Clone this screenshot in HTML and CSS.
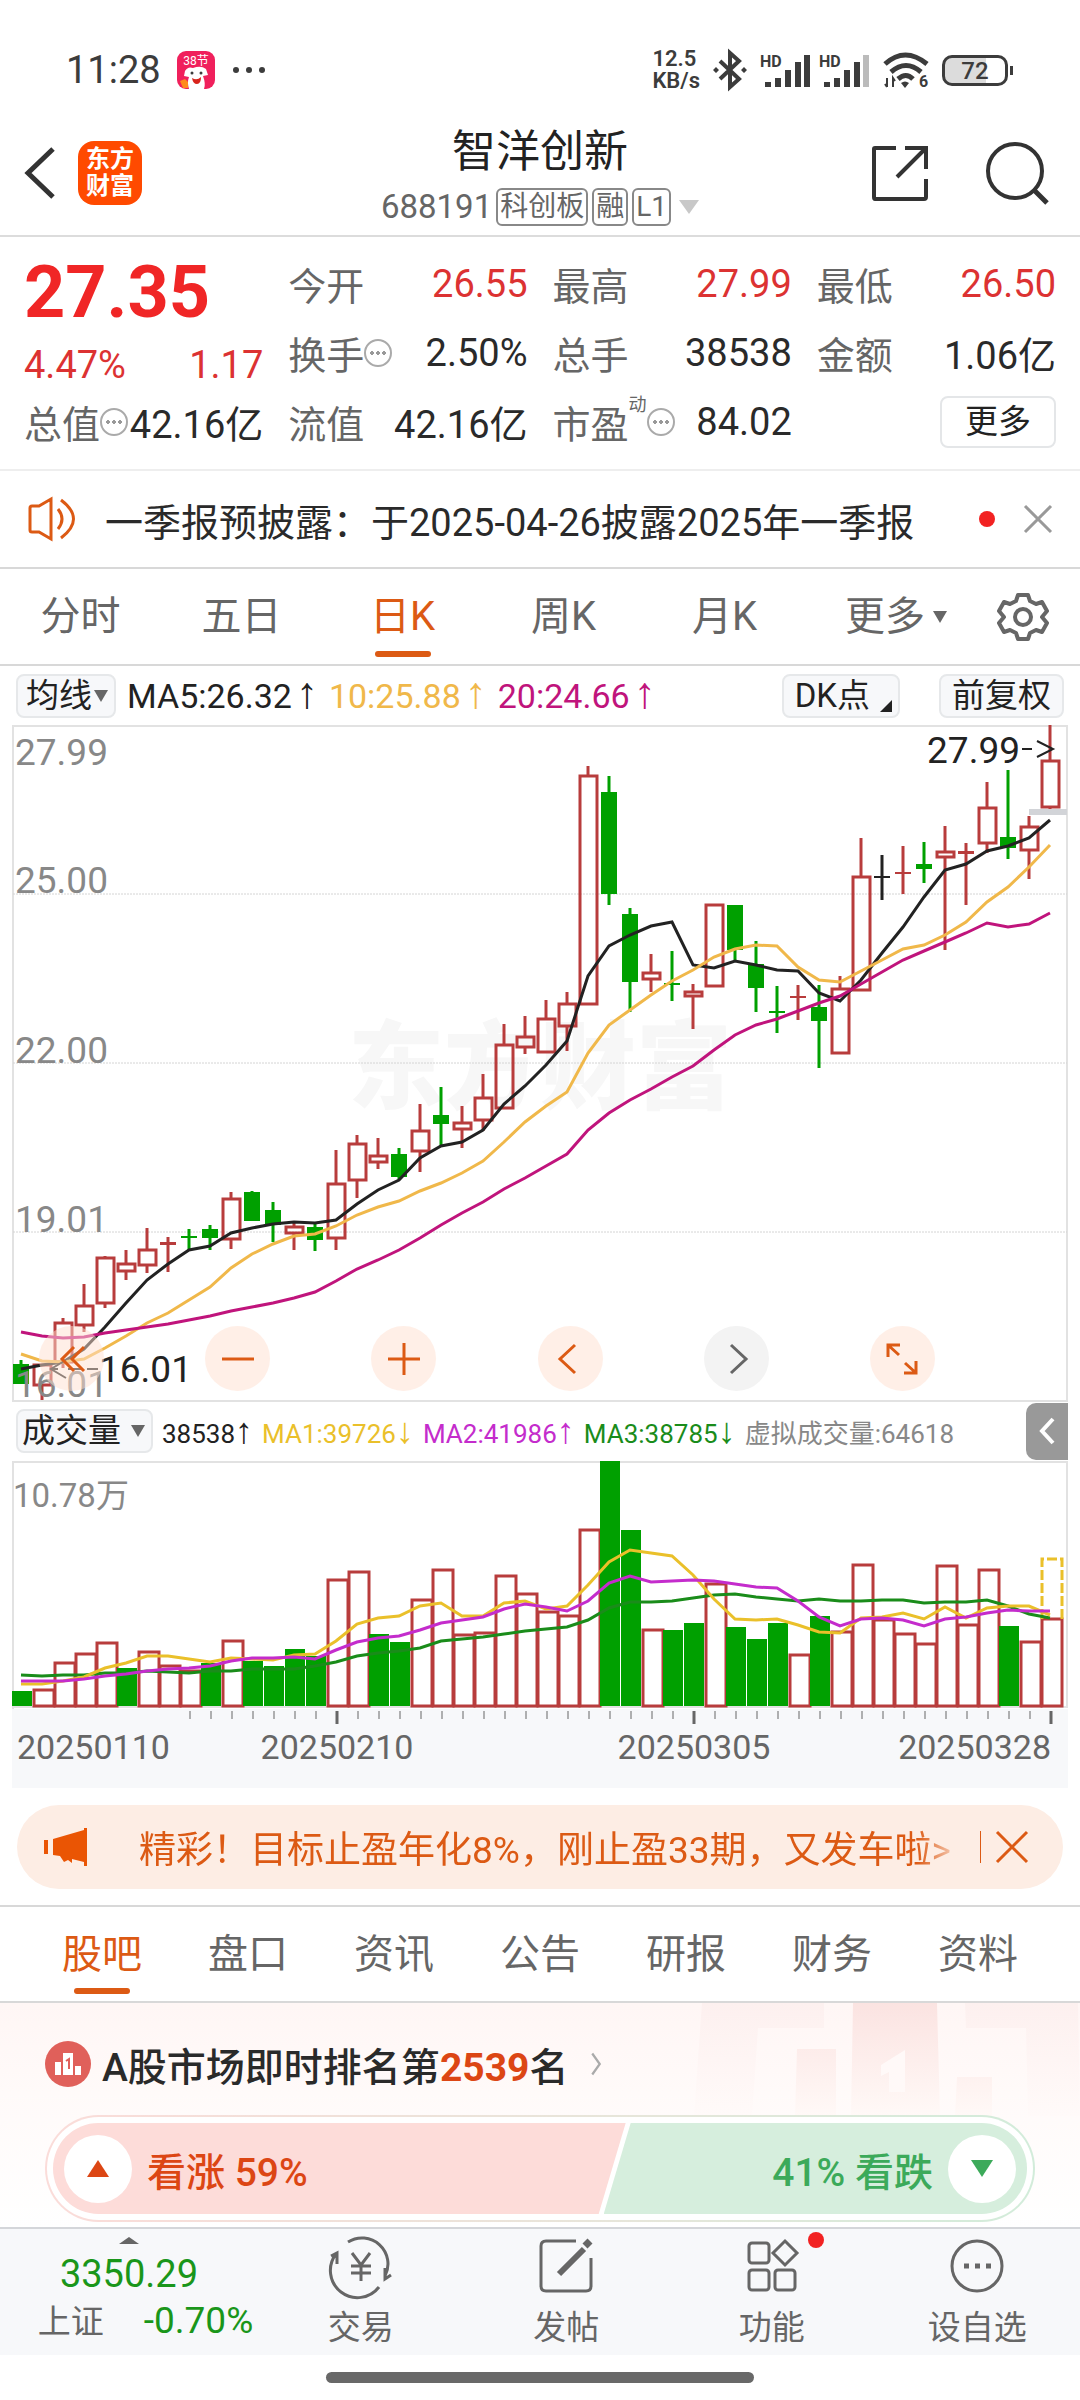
FILE: index.html
```
<!DOCTYPE html>
<html lang="zh-CN">

<head>
    <meta charset="UTF-8">
    <meta name="viewport" content="width=device-width, initial-scale=1.0">
    <title>智洋创新 688191</title>
    <link rel="stylesheet" href="styles.css">
</head>

<body>

    <div class="status-bar">
        <span class="clock">11:28</span>
        <svg class="app-badge" viewBox="0 0 38 38" width="38" height="38">
            <rect width="38" height="38" rx="9" fill="#f0205c" />
            <text x="19" y="14" text-anchor="middle" font-size="12" fill="#fff">38节</text>
            <path d="M8 20q3-5 8-3q8-3 13 1l2 6l-5 1q3 8 1 13H12q-2-7 0-12l-5-1z" fill="#fff" />
            <circle cx="15" cy="22" r="1.5" /><circle cx="24" cy="22" r="1.5" />
            <path d="M15 27q5 3 9-1q0 7-4 7t-5-6z" fill="#d8241c" />
            <path d="M3 30l5-2l3 3v6H6z" fill="#ff8a1c" />
        </svg>
        <svg class="more-dots" viewBox="0 0 34 8" width="34" height="8">
            <circle cx="4" cy="4" r="3" /><circle cx="17" cy="4" r="3" /><circle cx="30" cy="4" r="3" />
        </svg>
        <span class="net-speed">12.5<br>KB/s</span>
        <svg viewBox="0 0 36 40" width="36" height="40" fill="none" stroke="#3c3c3c" stroke-width="4">
            <path d="M8 11L27 29L18 37V3L27 11L8 29" />
            <path d="M1 20l3-3l3 3l-3 3zM29 20l3-3l3 3l-3 3z" fill="#3c3c3c" stroke="none" />
        </svg>
        <svg class="signal" viewBox="0 0 52 36" width="52" height="36">
            <text x="0" y="15" font-size="16" font-weight="700">HD</text>
            <path d="M5 30h6v5H5zM15 26h6v9h-6zM25 18h6v17h-6zM35 10h6v25h-6zM44 3h6v32h-6z" />
        </svg>
        <svg class="signal" viewBox="0 0 52 36" width="52" height="36">
            <text x="0" y="15" font-size="16" font-weight="700">HD</text>
            <path d="M5 30h6v5H5zM15 26h6v9h-6zM25 18h6v17h-6zM35 10h6v25h-6z" />
            <path d="M44 3h6v32h-6z" opacity=".35" />
        </svg>
        <svg class="wifi" viewBox="0 0 48 38" width="48" height="38" fill="none" stroke="#3c3c3c" stroke-width="5">
            <path d="M3 13q20-18 42 0M9 21q15-13 30 0M16 28q8-7 15 0" />
            <path d="M19 32q4-3 8 0l-4 5z" fill="#3c3c3c" stroke="none" />
            <path d="M5 27v9M3 33l2 3M11 36v-9l2 3" stroke-width="2" />
            <text x="37" y="36" font-size="16" font-weight="700" fill="#3c3c3c" stroke="none">6</text>
        </svg>
        <span class="battery"><b>72</b></span>
    </div>

    <header>
        <button class="icon-btn" aria-label="返回">
            <svg viewBox="0 0 32 52" width="32" height="52" fill="none" stroke="#333" stroke-width="5">
                <path d="M29 2L4 26L29 50" />
            </svg>
        </button>
        <a class="brand" href="#">东方<br>财富</a>
        <div class="stock">
            <h1>智洋创新</h1>
            <p>688191<span class="tag">科创板</span><span class="tag">融</span><span class="tag">L1</span><i class="caret"></i></p>
        </div>
        <button class="icon-btn" aria-label="分享">
            <svg viewBox="0 0 56 56" width="56" height="56" fill="none" stroke="#333" stroke-width="4">
                <path d="M24 3H3q-1 0-1 1V52q0 2 1 2H52q2 0 2-2V34M33 3H54V24M54 3L25 32" />
            </svg>
        </button>
        <button class="icon-btn search" aria-label="搜索">
            <svg viewBox="0 0 64 64" width="64" height="64" fill="none" stroke="#333" stroke-width="4">
                <circle cx="30" cy="30" r="27" />
                <path d="M49 49L62 62" stroke-width="5" />
            </svg>
        </button>
    </header>

    <section class="quote">
        <div class="price">
            <strong>27.35</strong>
            <p><span>4.47%</span><span>1.17</span></p>
        </div>
        <div class="cell"><span>今开</span><b class="up">26.55</b></div>
        <div class="cell"><span>最高</span><b class="up">27.99</b></div>
        <div class="cell"><span>最低</span><b class="up">26.50</b></div>
        <div class="cell"><span>换手</span><i class="hint"></i><b>2.50%</b></div>
        <div class="cell"><span>总手</span><b>38538</b></div>
        <div class="cell"><span>金额</span><b>1.06亿</b></div>
        <div class="cell"><span>总值</span><i class="hint"></i><b>42.16亿</b></div>
        <div class="cell"><span>流值</span><b>42.16亿</b></div>
        <div class="cell"><span>市盈</span><sup>动</sup><i class="hint"></i><b>84.02</b></div>
        <div class="cell"><button class="more-btn">更多</button></div>
    </section>

    <section class="notice">
        <svg viewBox="0 0 48 42" width="48" height="42" fill="none" stroke="#dc5a14" stroke-width="3">
            <path d="M2 10q0-2 2-2h7L23 1V41L11 34H4q-2 0-2-2z" />
            <path d="M30 11q8 10 0 20M33 2q25 19 0 38" />
        </svg>
        <p>一季报预披露：于2025-04-26披露2025年一季报</p>
        <i class="dot"></i>
        <button class="icon-btn" aria-label="关闭">
            <svg viewBox="0 0 28 28" width="28" height="28" stroke="#999" stroke-width="3">
                <path d="M1 1L27 27M27 1L1 27" />
            </svg>
        </button>
    </section>

    <nav class="period">
        <a href="#">分时</a>
        <a href="#">五日</a>
        <a href="#" class="active">日K</a>
        <a href="#">周K</a>
        <a href="#">月K</a>
        <a href="#" class="wide">更多<i class="caret dark"></i></a>
        <button class="icon-btn" aria-label="设置">
            <svg viewBox="0 0 50 50" width="50" height="50" fill="none" stroke="#666" stroke-width="4" stroke-linejoin="round">
                <path d="M20 3H30L32 9L38 12L44 10L49 19L44 25L49 31L44 40L38 38L32 41L30 47H20L18 41L12 38L6 40L1 31L6 25L1 19L6 10L12 12L18 9z" />
                <circle cx="25" cy="25" r="8" />
            </svg>
        </button>
    </nav>

    <div class="indicator">
        <label class="picker">
            <select aria-label="主图指标">
                <option>均线</option>
            </select>
            <i class="caret dark"></i>
        </label>
        <span class="ma5">MA5:26.32<i class="arrow">↑</i></span>
        <span class="ma10">10:25.88<i class="arrow">↑</i></span>
        <span class="ma20">20:24.66<i class="arrow">↑</i></span>
        <button class="picker push">DK点<i class="corner"></i></button>
        <button class="picker fq">前复权</button>
    </div>

    <div class="chart">
        <svg id="kline" viewBox="0 0 1056 676"></svg>
        <div class="chart-tools">
            <button aria-label="最早">
                <svg viewBox="0 0 32 32"><path d="M18 4L6 16L18 28M28 4L16 16L28 28" /></svg>
            </button>
            <button aria-label="缩小">
                <svg viewBox="0 0 32 32"><path d="M0 16H32" /></svg>
            </button>
            <button aria-label="放大">
                <svg viewBox="0 0 32 32"><path d="M0 16H32M16 0V32" /></svg>
            </button>
            <button aria-label="向左">
                <svg viewBox="0 0 32 32"><path d="M21 2L6 16L21 30" /></svg>
            </button>
            <button aria-label="向右" class="off">
                <svg viewBox="0 0 32 32"><path d="M11 2L26 16L11 30" /></svg>
            </button>
            <button aria-label="全屏">
                <svg viewBox="0 0 32 32"><path d="M2 14V2H14M2 2L13 12M30 18V30H18M30 30L19 20" /></svg>
            </button>
        </div>
    </div>

    <div class="indicator volume">
        <label class="picker">
            <select aria-label="副图指标">
                <option>成交量</option>
            </select>
            <i class="caret dark big"></i>
        </label>
        <span class="ma5">38538<i class="arrow">↑</i></span>
        <span class="v1">MA1:39726<i class="arrow">↓</i></span>
        <span class="v2">MA2:41986<i class="arrow">↑</i></span>
        <span class="v3">MA3:38785<i class="arrow">↓</i></span>
        <span class="v4">虚拟成交量:64618</span>
        <button class="fold" aria-label="展开">
            <svg viewBox="0 0 16 28" width="16" height="28" fill="none" stroke="#fff" stroke-width="4">
                <path d="M14 2L3 14L14 26" />
            </svg>
        </button>
    </div>

    <div class="chart">
        <svg id="vol" viewBox="0 0 1056 248"></svg>
        <svg id="dates" viewBox="0 0 1056 79"></svg>
    </div>

    <div class="promo">
        <svg viewBox="0 0 44 38" width="44" height="38" fill="#ea5504">
            <path d="M0 12h4v14H0zM9 11L40 2V0h3V38h-3V34L28 31V35L24 32L20 34L16 28L9 27z" />
        </svg>
        <p>精彩！目标止盈年化8%，刚止盈33期，又发车啦&gt;</p>
        <button class="icon-btn" aria-label="关闭">
            <svg viewBox="0 0 32 32" width="32" height="32" stroke="#dc5a14" stroke-width="3">
                <path d="M1 1L31 31M31 1L1 31" />
            </svg>
        </button>
    </div>

    <nav class="sections">
        <a href="#" class="active">股吧</a>
        <a href="#">盘口</a>
        <a href="#">资讯</a>
        <a href="#">公告</a>
        <a href="#">研报</a>
        <a href="#">财务</a>
        <a href="#">资料</a>
    </nav>

    <section class="rank">
        <svg class="podium" viewBox="0 0 386 113" width="386" height="113">
            <defs>
                <linearGradient id="fade" x1="0" y1="0" x2="0" y2="1">
                    <stop offset="0" stop-color="#fbe3e1" />
                    <stop offset="1" stop-color="#fff9f7" />
                </linearGradient>
                <linearGradient id="fadeSoft" x1="0" y1="0" x2="0" y2="1">
                    <stop offset="0" stop-color="#fdf0ef" />
                    <stop offset="1" stop-color="#fffaf9" />
                </linearGradient>
            </defs>
            <path d="M8 0H130V25H64L58 113H0zM271 0H384L386 113H334L332 25H272z" fill="url(#fadeSoft)" />
            <path d="M159 0H243L246 113H157zM103 46H142V113H101zM263 74H298V113H261z" fill="url(#fade)" />
            <path d="M187 62L211 47V89H195V69L187 73z" fill="#fff9f8" />
        </svg>
        <h2>
            <svg viewBox="0 0 46 46" width="46" height="46">
                <circle cx="23" cy="23" r="23" fill="#e0605a" />
                <path d="M10 21h6v13h-6zM18 12h10v22H18zM30 25h6v9h-6z" fill="#fff" />
                <path d="M21 20l3-2v10" fill="none" stroke="#e0605a" stroke-width="2" />
            </svg>
            <span>A股市场即时排名第<em>2539</em>名</span>
            <svg viewBox="0 0 14 32" width="14" height="24" fill="none" stroke="#aaa" stroke-width="3">
                <path d="M2 2L12 16L2 30" />
            </svg>
        </h2>
        <div class="vote">
            <button class="bull"><i><b></b></i>看涨 59%</button>
            <button class="bear">41% 看跌<i><b></b></i></button>
        </div>
    </section>

    <nav class="tabbar">
        <a href="#" class="index">
            <i class="caret-up"></i>
            <b>3350.29</b>
            <span>上证<em>-0.70%</em></span>
        </a>
        <a href="#">
            <svg viewBox="0 0 60 56" width="60" height="56">
                <path d="M17 4A26 26 0 0 1 54 38M48 49A26 26 0 0 1 5 16M0 18L6 15V26M60 37L54 41V30" />
                <path d="M21 15L30 27L39 15M30 27V43M20 28H40M20 35H40" />
            </svg>
            交易
        </a>
        <a href="#">
            <svg viewBox="0 0 56 56" width="56" height="56">
                <path d="M38 3H8Q3 3 3 8V48Q3 53 8 53H48Q53 53 53 48V20" />
                <path d="M21 36L46 11" stroke-width="6" /><path d="M47 8L52 3" stroke-width="7" />
            </svg>
            发帖
        </a>
        <a href="#">
            <svg viewBox="0 0 56 56" width="56" height="56">
                <rect x="5" y="5" width="20" height="20" rx="3" />
                <rect x="5" y="32" width="20" height="20" rx="3" />
                <rect x="31" y="32" width="20" height="20" rx="3" />
                <path d="M41 3L53 15L41 27L29 15z" />
            </svg>
            功能
            <i class="dot"></i>
        </a>
        <a href="#">
            <svg viewBox="0 0 56 56" width="56" height="56">
                <circle cx="28" cy="28" r="25" />
                <path d="M15 28h5M26 28h5M37 28h5" stroke-width="5" />
            </svg>
            设自选
        </a>
    </nav>
    <div class="home-bar"></div>

    <script src="chart.js"></script>
</body>

</html>
```

FILE: styles.css
```
* {
    box-sizing: border-box;
}

body {
    margin: 0;
    background-color: #fff;
    color: #222;
    font-family: Roboto, "Noto Sans CJK SC", sans-serif;
}

a {
    color: inherit;
    text-decoration: none;
}

button,
select {
    margin: 0;
    padding: 0;
    border: 0;
    background: none;
    color: inherit;
    font: inherit;
}

select {
    appearance: none;
}

i,
em {
    font-style: normal;
}

h1,
h2,
p {
    margin: 0;
    font-weight: 400;
}

svg {
    display: block;
    flex: none;
    overflow: visible;
}

.icon-btn {
    display: flex;
}

/* Small triangles */
.caret {
    border: 10px solid transparent;
    border-top: 14px solid #c8c8c8;
    border-bottom: 0;
}

.caret.dark {
    border-width: 12px 7px 0;
    border-top-color: #666;
}

.caret.big {
    margin-left: 8px;
}

.dot {
    width: 16px;
    height: 16px;
    border-radius: 50%;
    background-color: #f22222;
}

/* Status bar */
.status-bar {
    display: flex;
    align-items: center;
    gap: 12px;
    height: 128px;
    padding: 12px 72px 0 66px;
    color: #3c3c3c;
    fill: #3c3c3c;
}

.clock {
    font-size: 38px;
}

.app-badge {
    margin-left: 4px;
}

.more-dots {
    margin: 0 auto 0 5px;
}

.net-speed {
    font-size: 22px;
    font-weight: 600;
    line-height: 22px;
}

.signal {
    margin-right: -5px;
}

.wifi {
    margin-left: 4px;
}

.battery {
    position: relative;
    width: 66px;
    height: 31px;
    border: 3px solid #3c3c3c;
    border-radius: 10px;
    background: linear-gradient(90deg, #dcdcdc 68%, #fff 68%);
    text-align: center;
    font-size: 24px;
    line-height: 26px;
}

.battery b {
    font-weight: 500;
}

.battery::after {
    content: "";
    position: absolute;
    top: 8px;
    right: -8px;
    width: 3px;
    height: 9px;
    background-color: #3c3c3c;
}

/* Title bar */
header {
    display: flex;
    align-items: center;
    height: 109px;
    padding: 0 31px 17px 24px;
    border-bottom: 2px solid #dcdcdc;
}

.brand {
    width: 64px;
    height: 64px;
    margin-left: 22px;
    padding-top: 5px;
    border-radius: 16px;
    background-color: #ff4a00;
    color: #fff;
    font-size: 24px;
    font-weight: 700;
    line-height: 27px;
    text-align: center;
}

.stock {
    flex: 1;
    padding: 8px 0 0 66px;
    text-align: center;
}

.stock h1 {
    font-size: 44px;
    line-height: 56px;
}

.stock p {
    display: flex;
    justify-content: center;
    align-items: center;
    gap: 4px;
    padding-top: 4px;
    color: #666;
    font-size: 33px;
    line-height: 46px;
}

.stock p .caret {
    margin-left: 4px;
}

.tag {
    padding: 0 2px;
    border: 2px solid #888;
    border-radius: 6px;
    font-size: 28px;
    line-height: 34px;
}

.search {
    margin-left: 57px;
}

/* Quote figures */
.quote {
    display: grid;
    grid-template-columns: repeat(4, minmax(0, 1fr));
    grid-auto-rows: 69px;
    column-gap: 25px;
    padding: 12px 24px 13px;
    border-bottom: 2px solid #eee;
    font-size: 38px;
}

.price {
    grid-row: span 2;
    padding-top: 2px;
    color: #f02626;
}

.price strong {
    display: block;
    font-size: 72px;
    line-height: 84px;
}

.price p {
    display: flex;
    justify-content: space-between;
    color: #dc3232;
    line-height: 60px;
}

.cell {
    display: flex;
    align-items: center;
    color: #666;
    white-space: nowrap;
}

.cell b {
    margin-left: auto;
    color: #2a2a2a;
    font-weight: 400;
}

.cell .up {
    color: #dc3232;
}

.cell sup {
    align-self: flex-start;
    font-size: 18px;
    line-height: 36px;
}

.hint {
    position: relative;
    flex: none;
    width: 28px;
    height: 28px;
    border: 2px solid #aaa;
    border-radius: 50%;
}

.hint::after {
    content: "";
    position: absolute;
    left: 4px;
    top: 10px;
    width: 16px;
    height: 4px;
    background: radial-gradient(circle at 2px 2px, #999 2px, transparent 2px) 0 0 / 6px 4px;
}

.more-btn {
    width: 116px;
    height: 52px;
    margin-left: auto;
    border: 2px solid #e4e6e8;
    border-radius: 8px;
    color: #222;
    font-size: 33px;
    line-height: 48px;
}

/* Announcement */
.notice {
    display: flex;
    align-items: center;
    height: 98px;
    padding: 0 28px;
    border-bottom: 2px solid #d8d8d8;
    color: #2a2a2a;
    font-size: 38px;
}

.notice p {
    flex: 1;
    padding-left: 29px;
    white-space: nowrap;
}

.notice .dot {
    margin-right: 29px;
}

/* Period tabs */
.period,
.sections {
    display: flex;
    height: 97px;
    border-bottom: 2px solid #d8d8d8;
    color: #666;
    font-size: 40px;
    line-height: 96px;
    text-align: center;
}

.period a {
    position: relative;
    flex: 161;
}

.period .wide {
    flex: 182;
    display: flex;
    justify-content: center;
    align-items: center;
    gap: 8px;
}

.period .icon-btn {
    width: 93px;
    align-items: center;
    padding-left: 11px;
}

.sections {
    padding: 0 29px;
}

.sections a {
    position: relative;
    flex: 1;
}

.period .active,
.sections .active {
    color: #dc5a14;
}

.active::after {
    content: "";
    position: absolute;
    left: 50%;
    bottom: 7px;
    width: 56px;
    height: 6px;
    margin-left: -28px;
    border-radius: 3px;
    background-color: #dc5a14;
}

/* Indicator rows above each chart */
.indicator {
    display: flex;
    align-items: center;
    gap: 11px;
    height: 59px;
    padding: 0 16px;
    font-size: 34px;
    white-space: nowrap;
}

.picker {
    display: flex;
    align-items: center;
    gap: 2px;
    height: 44px;
    padding: 0 6px 0 8px;
    border: 2px solid #e6e8ea;
    border-radius: 8px;
    background-color: #f7f8fa;
    font-size: 33px;
    line-height: 40px;
}

.push {
    margin-left: auto;
    gap: 10px;
    padding: 0 6px 0 11px;
}

.fq {
    margin-left: 28px;
    padding: 0 11px;
}

.corner {
    align-self: flex-end;
    margin-bottom: 4px;
    border-left: 12px solid transparent;
    border-bottom: 12px solid #222;
}

.arrow {
    margin-left: 4px;
    font-family: "Liberation Sans", sans-serif;
    font-size: 44px;
    line-height: 34px;
}

.ma10 {
    color: #f0b84a;
}

.ma20 {
    color: #c0147c;
}

.volume {
    height: 60px;
    padding-right: 12px;
    gap: 9px;
    font-size: 26px;
}

.volume .picker {
    padding: 0 6px 0 4px;
}

.volume .arrow {
    margin-left: 0;
    font-size: 36px;
}

.v1 {
    color: #eac02a;
}

.v2 {
    color: #c42ccc;
}

.v3 {
    color: #1a8c1a;
}

.v4 {
    color: #888;
}

.fold {
    display: flex;
    align-items: center;
    justify-content: center;
    width: 42px;
    height: 57px;
    margin-left: auto;
    border-radius: 10px 0 0 10px;
    background-color: #999;
}

/* Charts */
.chart {
    position: relative;
    margin: 0 12px;
}

.chart > svg {
    width: 100%;
    height: auto;
}

.frame {
    fill: none;
    stroke: #e2e2e2;
    stroke-width: 2;
}

.grid {
    stroke: #d4d4d4;
    stroke-dasharray: 2 1;
}

.watermark {
    fill: #f7f7f7;
    font-size: 96px;
    font-weight: 900;
}

.axis {
    fill: #888;
    font-size: 37px;
}

.axis.small {
    font-size: 33px;
}

.note {
    fill: #222;
    font-size: 37px;
}

.date {
    fill: #666;
    font-size: 34px;
}

.line {
    fill: none;
    stroke-width: 3;
}

.chart-tools {
    position: absolute;
    left: 27px;
    right: 133px;
    bottom: 10px;
    display: flex;
    justify-content: space-between;
}

.chart-tools button {
    display: flex;
    align-items: center;
    justify-content: center;
    width: 65px;
    height: 65px;
    border-radius: 50%;
    background-color: rgba(255, 224, 208, 0.5);
}

.chart-tools svg {
    width: 32px;
    height: 32px;
    fill: none;
    stroke: #dc5a14;
    stroke-width: 3;
}

.chart-tools .off {
    background-color: #f3f3f3;
}

.chart-tools .off svg {
    stroke: #666;
}

/* Promo strip */
.promo {
    display: flex;
    align-items: center;
    height: 84px;
    margin: 17px 17px 16px;
    padding: 0 35px 0 27px;
    border-radius: 42px;
    background-color: #fdede4;
    color: #dc5a14;
    font-size: 37px;
}

.promo p {
    flex: 1;
    margin: 0 14px 0 51px;
    overflow: hidden;
    white-space: nowrap;
    -webkit-mask-image: linear-gradient(90deg, #000 94%, transparent);
    mask-image: linear-gradient(90deg, #000 94%, transparent);
}

.promo .icon-btn {
    padding-left: 15px;
    border-left: 1px solid #dc5a14;
}

.sections {
    height: 98px;
    border-top: 2px solid #d8d8d8;
}

/* Market rank and vote */
.rank {
    position: relative;
    height: 224px;
    padding: 28px 45px 0;
    background: linear-gradient(#fff6f5, #fffaf9 40%, #fff);
}

.podium {
    position: absolute;
    top: 0;
    right: 0;
}

.rank h2 {
    position: relative;
    display: flex;
    align-items: center;
    gap: 11px;
    height: 66px;
    color: #2a2a2a;
    font-size: 39px;
    font-weight: 500;
}

.rank h2 svg:last-child {
    margin-left: 10px;
}

.rank em {
    color: #dc4614;
    font-weight: 700;
}

.vote {
    position: relative;
    display: flex;
    height: 107px;
    margin-top: 18px;
    padding: 6px;
    border: 2px solid transparent;
    border-radius: 54px;
    background:
        linear-gradient(#fff, #fff) padding-box,
        linear-gradient(90deg, #fbdcd9, #e6e6da 60%, #d2ecda) border-box;
    font-size: 39px;
    font-weight: 500;
}

.vote button {
    display: flex;
    align-items: center;
    gap: 15px;
    height: 91px;
    padding: 0 11px;
}

.vote i {
    display: flex;
    align-items: center;
    justify-content: center;
    width: 68px;
    height: 68px;
    border-radius: 50%;
    background-color: #fff;
}

.vote .bull {
    flex: 59;
    border-radius: 46px 0 0 46px;
    background-color: #fddcd9;
    color: #dc4614;
    clip-path: polygon(0 0, 100% 0, calc(100% - 27px) 100%, 0 100%);
}

.vote .bear {
    flex: 43;
    justify-content: flex-end;
    margin-left: -22px;
    border-radius: 0 46px 46px 0;
    background-color: #d6eedd;
    color: #3caa5a;
    clip-path: polygon(27px 0, 100% 0, 100% 100%, 0 100%);
}

.bull b {
    border: 11px solid transparent;
    border-top: 0;
    border-bottom: 17px solid #dc4614;
}

.bear b {
    border: 11px solid transparent;
    border-bottom: 0;
    border-top: 17px solid #3caa5a;
}

/* Bottom bar */
.tabbar {
    display: grid;
    grid-template-columns: 258px repeat(4, 1fr);
    height: 128px;
    border-top: 2px solid #d4d6da;
    background-color: #f7f8fa;
    color: #666;
    font-size: 33px;
    line-height: 44px;
    text-align: center;
}

.tabbar a {
    position: relative;
    display: flex;
    flex-direction: column;
    align-items: center;
    gap: 12px;
    padding-top: 9px;
}

.tabbar svg {
    fill: none;
    stroke: #666;
    stroke-width: 3;
}

.tabbar .dot {
    position: absolute;
    top: 3px;
    left: 50%;
    margin-left: 36px;
}

.tabbar .index {
    gap: 3px;
    padding-top: 8px;
}

.index b {
    padding-top: 5px;
    color: #1a961a;
    font-size: 38px;
    font-weight: 400;
}

.index span {
    padding-left: 33px;
}

.index em {
    margin-left: 40px;
    color: #1a961a;
    font-size: 37px;
}

.caret-up {
    border: 10px solid transparent;
    border-top: 0;
    border-bottom: 7px solid #666;
}

.home-bar {
    width: 428px;
    height: 11px;
    margin: 17px auto 0;
    border-radius: 6px;
    background-color: #686868;
}
```

FILE: chart.js
```
// r = up day (hollow), g = down day (filled), k = flat
// [type, high, body top, body bottom, low]
const candles = [
    ['g', 1478, 1487, 1532, 1532], ['r', 1490, 1490, 1534, 1568], ['r', 1384, 1395, 1482, 1497],
    ['r', 1309, 1357, 1400, 1415], ['r', 1245, 1249, 1351, 1361], ['r', 1233, 1264, 1279, 1300],
    ['r', 1183, 1233, 1265, 1283], ['r', 1203, 1213, 1220, 1281], ['g', 1185, 1200, 1203, 1231],
    ['g', 1176, 1184, 1204, 1231], ['r', 1102, 1118, 1208, 1230], ['g', 1100, 1102, 1168, 1168],
    ['g', 1124, 1143, 1176, 1215], ['r', 1172, 1180, 1195, 1231], ['g', 1172, 1180, 1210, 1235],
    ['r', 1007, 1084, 1205, 1233], ['r', 974, 994, 1076, 1115], ['r', 981, 1021, 1036, 1050],
    ['g', 1004, 1018, 1068, 1072], ['r', 905, 965, 1010, 1057], ['g', 867, 930, 949, 1000],
    ['r', 909, 947, 961, 1003], ['r', 838, 892, 941, 965], ['r', 725, 772, 913, 913],
    ['r', 708, 755, 777, 793], ['r', 673, 715, 789, 789], ['r', 655, 681, 730, 787],
    ['r', 148, 171, 682, 682], ['g', 171, 206, 435, 459], ['g', 466, 479, 632, 700],
    ['r', 568, 611, 625, 654], ['g', 562, 634, 636, 674], ['r', 636, 655, 662, 736],
    ['r', 458, 459, 640, 640], ['g', 459, 460, 560, 583], ['g', 540, 592, 645, 699],
    ['g', 640, 697, 699, 746], ['r', 638, 662, 662, 717], ['g', 638, 688, 720, 825],
    ['r', 618, 648, 791, 791], ['r', 308, 396, 649, 649], ['k', 347, 395, 398, 449],
    ['r', 328, 386, 386, 434], ['g', 318, 367, 379, 409], ['r', 282, 340, 352, 559],
    ['r', 320, 339, 346, 459], ['r', 184, 243, 321, 343], ['g', 156, 307, 331, 357],
    ['r', 259, 285, 336, 400], ['r', 55, 136, 239, 244]
];

const ma5 = [1499, 1490, 1484, 1454, 1405, 1351, 1299, 1264, 1233, 1224, 1194, 1182, 1174, 1169, 1171, 1164, 1128,
    1098, 1075, 1027, 1000, 991, 964, 905, 865, 817, 764, 619, 551, 527, 506, 497, 594, 600, 585, 593, 604, 606, 657,
    675, 627, 567, 509, 441, 380, 368, 338, 327, 308, 268];
const ma10 = [1465, 1480, 1484, 1476, 1451, 1425, 1395, 1373, 1344, 1314, 1273, 1240, 1218, 1201, 1197, 1178, 1154,
    1136, 1123, 1099, 1082, 1060, 1032, 991, 946, 909, 878, 791, 729, 694, 660, 630, 605, 576, 557, 549, 551, 599,
    628, 631, 606, 582, 557, 549, 527, 497, 452, 418, 375, 324];
const ma20 = [1415, 1424, 1429, 1426, 1417, 1411, 1404, 1397, 1388, 1379, 1368, 1360, 1351, 1339, 1326, 1302, 1275,
    1254, 1233, 1206, 1177, 1150, 1124, 1096, 1071, 1044, 1017, 964, 926, 897, 872, 845, 819, 783, 751, 729, 714, 696,
    678, 663, 637, 609, 582, 562, 542, 522, 500, 509, 501, 477];

const volumes = [902, 899, 819, 792, 758, 833, 786, 828, 842, 820, 753, 814, 828, 777, 797, 570, 545, 732, 756, 630,
    541, 735, 730, 558, 612, 666, 678, 420, 213, 419, 719, 719, 698, 581, 711, 747, 699, 796, 678, 725, 526, 690, 733,
    763, 527, 705, 539, 708, 756, 687];
// Days that closed below the previous close
const fallDays = [0, 5, 9, 11, 12, 13, 14, 17, 18, 28, 29, 31, 32, 34, 35, 36, 38, 47];
const vma1 = [883, 883, 872, 862, 834, 820, 797, 799, 808, 817, 804, 808, 809, 796, 792, 754, 702, 683, 679, 647, 640,
    679, 679, 638, 634, 657, 648, 584, 516, 481, 490, 497, 556, 626, 686, 690, 687, 706, 725, 728, 685, 681, 670, 686,
    650, 683, 653, 648, 648, 676];
const vma2 = [872, 874, 872, 866, 857, 851, 843, 836, 835, 828, 812, 804, 805, 802, 806, 779, 755, 745, 738, 720, 698,
    689, 681, 658, 641, 651, 663, 632, 578, 558, 575, 573, 569, 573, 582, 590, 593, 634, 680, 707, 687, 685, 689, 707,
    688, 682, 668, 660, 664, 663];
const vma3 = [855, 858, 856, 854, 850, 848, 842, 846, 848, 844, 842, 838, 838, 836, 828, 816, 799, 790, 783, 773, 754,
    747, 742, 731, 724, 717, 710, 690, 653, 637, 637, 632, 625, 616, 611, 620, 628, 632, 627, 633, 632, 629, 629, 640,
    635, 637, 630, 647, 673, 684];

const colors = { r: '#b83c3c', g: '#00a000', k: '#222' };
const xAt = i => 9 + 21 * i;
const priceY = v => Math.round(v / 2.24 - 25);
const volY = v => Math.round(v / 3 - 71);

function line(values, yAt, color) {
    const points = values.map((v, i) => `${xAt(i)},${yAt(v)}`).join(' ');
    return `<polyline class="line" points="${points}" stroke="${color}" />`;
}

function drawKline() {
    let html = '<text class="watermark" x="528" y="376" text-anchor="middle">东方财富</text>';
    html += '<rect class="frame" x="1" y="1" width="1054" height="675" />';
    [169, 338, 507].forEach(y => {
        html += `<line class="grid" x1="1" x2="1055" y1="${y}" y2="${y}" />`;
    });
    html += '<rect x="1017" y="84" width="38" height="6" fill="#d2d4d8" />';

    candles.forEach(([type, high, top, bottom, low], i) => {
        const x = xAt(i);
        const c = colors[type];
        const t = priceY(top);
        const b = priceY(bottom);
        html += `<path d="M${x} ${priceY(high)}V${t}M${x} ${b}V${priceY(low)}" stroke="${c}" stroke-width="3" />`;
        if (type == 'r' && b - t > 3) {
            html += `<rect x="${x - 8}" y="${t}" width="17" height="${b - t}" fill="none" stroke="${c}" stroke-width="3" />`;
        } else {
            html += `<rect x="${x - 8}" y="${t}" width="16" height="${Math.max(b - t, 2)}" fill="${c}" />`;
        }
    });

    html += line(ma5, priceY, '#222');
    html += line(ma10, priceY, '#f0b84a');
    html += line(ma20, priceY, '#c0147c');

    [['27.99', 40], ['25.00', 168], ['22.00', 338], ['19.01', 507], ['16.01', 672]].forEach(([label, y]) => {
        html += `<text class="axis" x="3" y="${y}">${label}</text>`;
    });
    html += '<path d="M54 635L39 644L54 653M39 644H46M56 644H70M75 644H86" fill="none" stroke="#222" stroke-width="2" />';
    html += '<text class="note" x="87" y="657">16.01</text>';
    html += '<text class="note" x="1008" y="38" text-anchor="end">27.99</text>';
    html += '<path d="M1010 24H1020M1025 16L1041 24L1025 32" fill="none" stroke="#222" stroke-width="2" />';
    document.getElementById('kline').innerHTML = html;
}

function drawVolume() {
    let html = '<path class="frame" d="M1 248V1H1055V246H1" />';
    volumes.forEach((v, i) => {
        const x = xAt(i);
        const y = volY(v);
        if (fallDays.includes(i)) {
            html += `<rect x="${x - 9}" y="${y}" width="20" height="${245 - y}" fill="#00a000" />`;
        } else {
            html += `<rect x="${x - 8}" y="${y}" width="20" height="${245 - y}" fill="none" stroke="#b83c3c" stroke-width="3" />`;
        }
    });
    html += '<path d="M1030 158V98H1050V158" fill="none" stroke="#eac02a" stroke-width="3" stroke-dasharray="10 3" />';
    html += line(vma3, volY, '#1a8c1a');
    html += line(vma1, volY, '#eac02a');
    html += line(vma2, volY, '#c42ccc');
    html += '<text class="axis small" x="1" y="46">10.78万</text>';
    document.getElementById('vol').innerHTML = html;
}

function drawDates() {
    let html = '<rect width="1056" height="79" fill="#f7f8fa" />';
    for (let i = 8; i < candles.length; i++) {
        const major = i == 15 || i == 32 || i == 49;
        html += `<path d="M${xAt(i) + 1} 2v${major ? 13 : 8}" stroke="#666" stroke-width="${major ? 3 : 1}" />`;
    }
    html += '<text class="date" x="5" y="50">20250110</text>';
    html += '<text class="date" x="325" y="50" text-anchor="middle">20250210</text>';
    html += '<text class="date" x="682" y="50" text-anchor="middle">20250305</text>';
    html += '<text class="date" x="1039" y="50" text-anchor="end">20250328</text>';
    document.getElementById('dates').innerHTML = html;
}

drawKline();
drawVolume();
drawDates();
```
